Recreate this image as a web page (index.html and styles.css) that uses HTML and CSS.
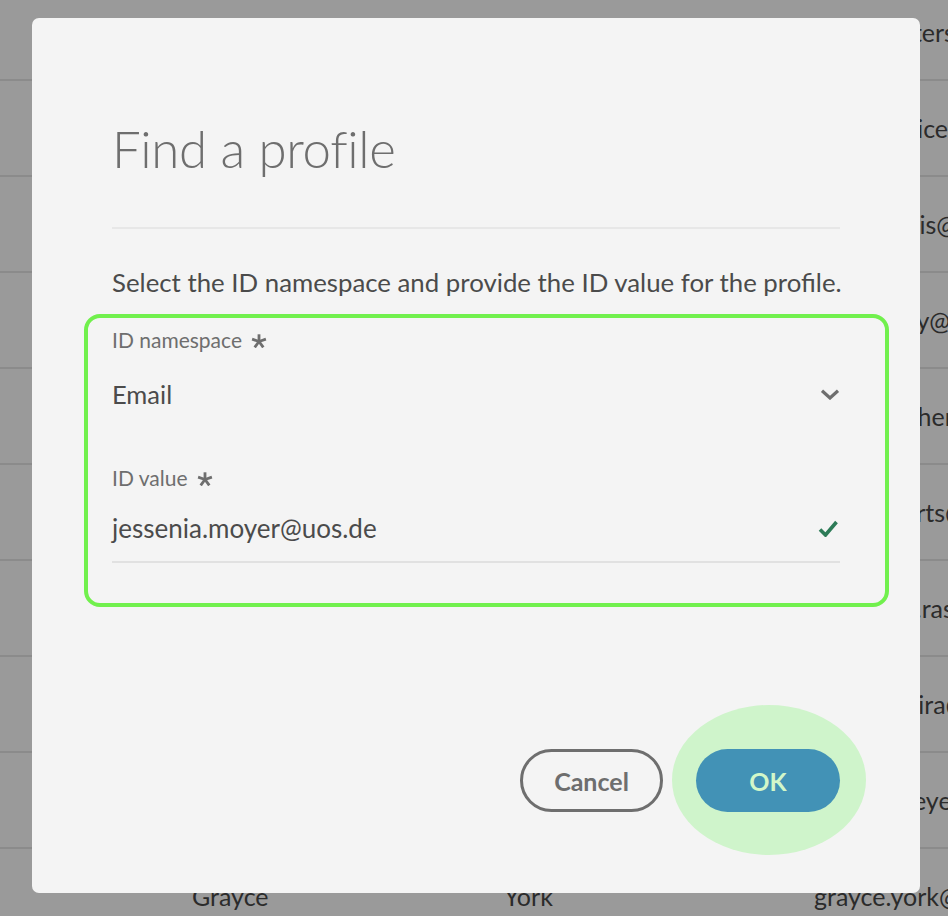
FILE: index.html
```html
<!DOCTYPE html>
<html lang="en">
<head>
<meta charset="utf-8">
<title>Find a profile</title>
<link rel="stylesheet" href="styles.css">
</head>
<body>
<div class="table">
  <div class="row"><span>Mary</span><span>Winters</span><span>mary.winters@email.com</span></div>
  <div class="row"><span>Lina</span><span>Prentice</span><span>lina.prentice@email.com</span></div>
  <div class="row"><span>Maria</span><span>Davis</span><span>maria.davis@email.com</span></div>
  <div class="row"><span>Annie</span><span>Kelly</span><span>annie.kelly@email.com</span></div>
  <div class="row"><span>Owen</span><span>Fischer</span><span>owen.fischer@email.com</span></div>
  <div class="row"><span>Nina</span><span>Roberts</span><span>nina.roberts@email.com</span></div>
  <div class="row"><span>Katharina</span><span>Rasmussen</span><span>katharina.rasmussen@email.com</span></div>
  <div class="row"><span>Lena</span><span>Palmira</span><span>lena.palmira@email.com</span></div>
  <div class="row"><span>Sandra</span><span>Meyer</span><span>sandra.meyer@email.com</span></div>
  <div class="row"><span>Grayce</span><span>York</span><span>grayce.york@uos.de</span></div>
</div>

<div class="dialog" role="dialog" aria-labelledby="dlg-title">
  <h1 class="dialog-title" id="dlg-title">Find a profile</h1>
  <div class="divider"></div>
  <p class="dialog-desc">Select the ID namespace and provide the ID value for the profile.</p>

  <div class="fields">
    <div class="field-label">ID namespace
      <svg class="req" width="16" height="14" viewBox="0 0 16 14"><g stroke="currentColor" stroke-width="2.8" fill="none"><line x1="8" y1="7.5" x2="8" y2="0.3"/><line x1="8" y1="7.5" x2="14.9" y2="5.2"/><line x1="8" y1="7.5" x2="12.3" y2="13.4"/><line x1="8" y1="7.5" x2="3.7" y2="13.4"/><line x1="8" y1="7.5" x2="1.1" y2="5.2"/></g></svg>
    </div>
    <div class="select">
      <span class="select-value">Email</span>
      <svg class="chevron" width="20" height="11" viewBox="0 0 20 11"><path d="M2 1.8 L10 9 L18 1.8" stroke="#6e6e6e" stroke-width="3.2" fill="none"/></svg>
    </div>

    <div class="field-label second">ID value
      <svg class="req" width="16" height="14" viewBox="0 0 16 14"><g stroke="currentColor" stroke-width="2.8" fill="none"><line x1="8" y1="7.5" x2="8" y2="0.3"/><line x1="8" y1="7.5" x2="14.9" y2="5.2"/><line x1="8" y1="7.5" x2="12.3" y2="13.4"/><line x1="8" y1="7.5" x2="3.7" y2="13.4"/><line x1="8" y1="7.5" x2="1.1" y2="5.2"/></g></svg>
    </div>
    <div class="textfield">
      <span class="text-value">jessenia.moyer@uos.de</span>
      <svg class="check" width="20" height="18" viewBox="0 0 20 18"><path d="M2 10.5 L7.5 16 L18.5 3" stroke="#2d7b57" stroke-width="3.6" fill="none"/></svg>
    </div>
  </div>

  <div class="actions">
    <button class="btn btn-secondary">Cancel</button>
    <span class="ok-wrap"><button class="btn btn-primary">OK</button></span>
  </div>
</div>
</body>
</html>
```
FILE: styles.css
```css
* { box-sizing: border-box; }

html, body {
  margin: 0;
  padding: 0;
  width: 948px;
  height: 916px;
  overflow: hidden;
  background: #9a9a9a;
  font-family: Lato, "Open Sans", sans-serif;
}

.table {
  margin-top: -15px;
  display: flex;
  flex-direction: column;
}

.row {
  height: 96px;
  border-bottom: 2px solid #8b8b8b;
  display: grid;
  grid-template-columns: 312px 310px auto;
  align-items: center;
  padding-left: 192px;
  font-size: 25px;
  color: #2b2b2b;
  white-space: nowrap;
  overflow: hidden;
}

.dialog {
  position: absolute;
  left: 32px;
  top: 18px;
  width: 888px;
  height: 875px;
  background: #f4f4f4;
  border-radius: 7px;
  padding: 99px 80px 0;
}

.dialog-title {
  margin: 0;
  font-size: 51px;
  font-weight: 300;
  line-height: 64px;
  color: #6e6e6e;
  letter-spacing: -0.3px;
}

.divider {
  margin-top: 46px;
  height: 2px;
  background: #e7e7e7;
}

.dialog-desc {
  margin: 37px 0 0;
  font-size: 25.8px;
  line-height: 32px;
  color: #4b4b4b;
  white-space: nowrap;
}

.fields {
  margin: 16px -49px 0 -28px;
  border: 4px solid #71f04d;
  border-radius: 16px;
  padding: 9px 45px 40px 24px;
}

.field-label {
  font-size: 21px;
  line-height: 26px;
  color: #6e6e6e;
  display: flex;
  align-items: center;
  gap: 9px;
}

.field-label.second {
  margin-top: 55px;
}

.req {
  color: #6e6e6e;
  margin-top: 1px;
}

.select {
  margin-top: 25px;
  display: flex;
  align-items: center;
  justify-content: space-between;
  font-size: 25.5px;
  line-height: 32px;
  color: #4b4b4b;
}

.textfield {
  margin-top: 21px;
  padding-bottom: 17px;
  border-bottom: 2px solid #e1e1e1;
  display: flex;
  align-items: center;
  justify-content: space-between;
  font-size: 26px;
  line-height: 32px;
  color: #4b4b4b;
}

.check {
  margin-right: 2px;
}

.actions {
  margin-top: 142px;
  display: flex;
  justify-content: flex-end;
  align-items: center;
  gap: 33px;
}

.btn {
  font-family: Lato, "Open Sans", sans-serif;
  font-weight: 700;
  font-size: 25px;
  height: 63px;
  border-radius: 32px;
  padding: 0;
  cursor: pointer;
}

.btn-secondary {
  width: 143px;
  background: transparent;
  border: 3px solid #6e6e6e;
  color: #6e6e6e;
}

.ok-wrap {
  position: relative;
  display: block;
  isolation: isolate;
}

.ok-wrap::before {
  content: "";
  position: absolute;
  left: -24px;
  top: -44px;
  width: 194px;
  height: 150px;
  border-radius: 50%;
  background: #cff4cb;
  z-index: -1;
}

.btn-primary {
  display: block;
  width: 144px;
  border: none;
  background: #4292b6;
  color: #d2f7c9;
}
```
